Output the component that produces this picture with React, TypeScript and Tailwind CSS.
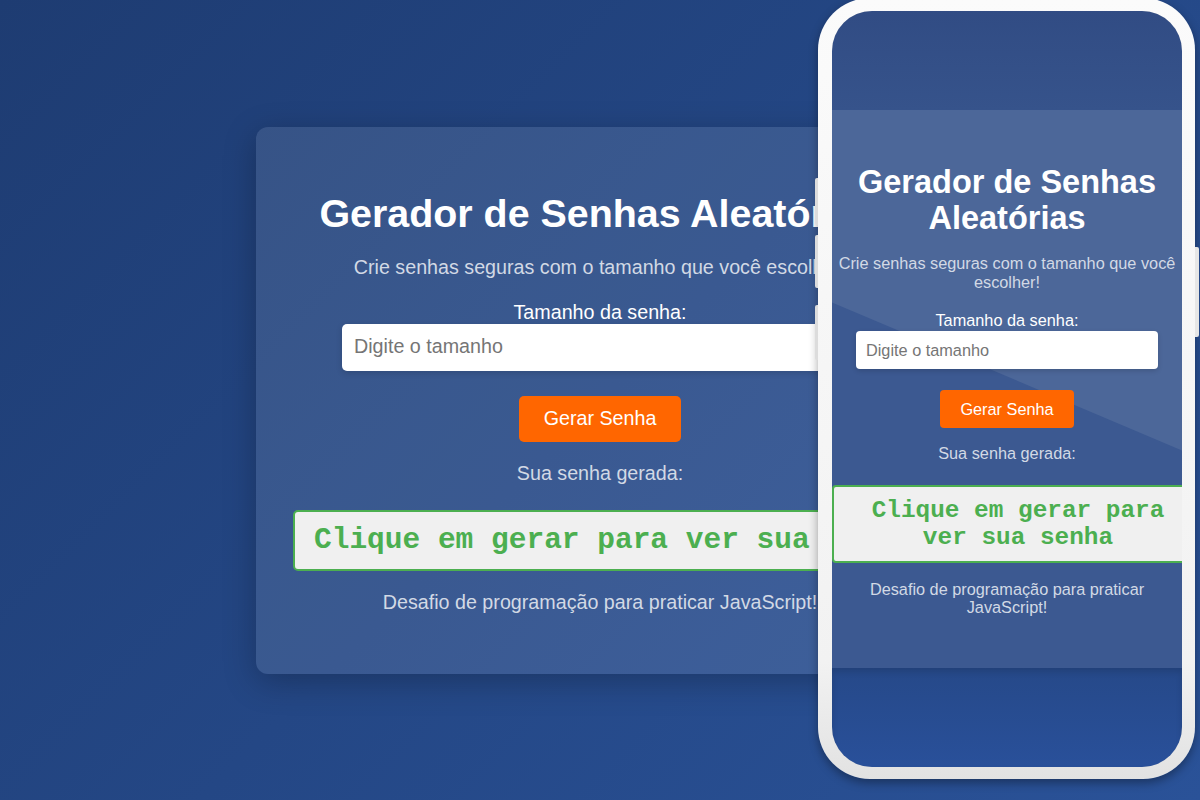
import React from "react";

const sans = { fontFamily: '"Liberation Sans", Arial, sans-serif' };

export default function App() {
  return (
    <div
      className="relative w-[1200px] h-[800px] overflow-hidden flex items-center justify-center bg-[linear-gradient(135deg,#1e3c72_0%,#2a5298_100%)]"
      style={sans}
    >
      {/* Main desktop card */}
      <div className="w-[688px] h-[547px] rounded-[12px] bg-white/10 shadow-[0_8px_32px_rgba(0,0,0,0.25)] flex flex-col items-center pt-[65px]">
        <h1 className="text-[39.4px] leading-[43px] font-bold text-white whitespace-nowrap">
          Gerador de Senhas Aleatórias
        </h1>
        <p className="mt-[21px] text-[19.7px] leading-[22px] text-[#d2d9e5] whitespace-nowrap">
          Crie senhas seguras com o tamanho que você escolher!
        </p>
        <label className="mt-[23px] text-[19.7px] leading-[22px] text-white">Tamanho da senha:</label>
        <div className="mt-[1px] w-[516px] h-[47px] rounded-[5px] bg-white shadow-[0_2px_6px_rgba(0,0,0,0.15)] flex items-center pl-[12px] text-[19.7px] text-[#757575]">
          Digite o tamanho
        </div>
        <div className="mt-[25px] w-[162px] h-[46px] rounded-[5px] bg-[#ff6600] flex items-center justify-center text-[19.7px] text-white">
          Gerar Senha
        </div>
        <p className="mt-[20px] text-[19.7px] leading-[22px] text-[#d2d9e5]">Sua senha gerada:</p>
        <div className="mt-[26px] w-[614px] h-[61px] rounded-[5px] bg-[#f0f0f0] border-[2.5px] border-[#4caf50] flex items-center pl-[19px] whitespace-nowrap overflow-hidden">
          <span
            className="text-[29.5px] leading-[32px] font-bold text-[#4caf50]"
            style={{ fontFamily: '"Liberation Mono", "Courier New", monospace' }}
          >
            Clique em gerar para ver sua senha
          </span>
        </div>
        <p className="mt-[20px] text-[19.7px] leading-[22px] text-[#d2d9e5] whitespace-nowrap">
          Desafio de programação para praticar JavaScript!
        </p>
      </div>

      {/* Phone mockup */}
      <div className="absolute left-[818px] top-[-2px] w-[377px] h-[781px] rounded-[52px] bg-[linear-gradient(180deg,#fbfbfb_0%,#f2f2f2_85%,#e2e2e2_100%)] pt-[13px] pl-[14px] pr-[13px] pb-[12px] shadow-[0_4px_10px_rgba(0,0,0,0.35)]">
        {/* side buttons */}
        <div className="absolute left-[-3px] top-[180px] w-[3px] h-[47px] rounded-l-[2px] bg-[#dcdcdc]" />
        <div className="absolute left-[-3px] top-[237px] w-[3px] h-[53px] rounded-l-[2px] bg-[#dcdcdc]" />
        <div className="absolute left-[-3px] top-[307px] w-[3px] h-[55px] rounded-l-[2px] bg-[#dcdcdc]" />
        <div className="absolute right-[-4px] top-[249px] w-[4px] h-[90px] rounded-r-[2px] bg-[#e6e6e6]" />

        <div className="w-full h-full rounded-[40px] overflow-hidden flex flex-col shadow-[inset_0_0_4px_rgba(0,0,0,0.3)]">
          <div className="h-[99px] shrink-0 bg-[linear-gradient(180deg,#314c84_0%,#36538b_100%)]" />
          <div className="relative h-[558px] shrink-0 bg-[#3c5991] flex flex-col items-center pt-[54px]">
            <div className="absolute inset-0 bg-[#4c6799] [clip-path:polygon(0_0,100%_0,100%_61%,0_34.5%)]" />
            <h2 className="relative text-[32.5px] leading-[36px] font-bold text-white text-center whitespace-nowrap">
              Gerador de Senhas
              <br />
              Aleatórias
            </h2>
            <p className="relative mt-[17.5px] text-[16.3px] leading-[19px] text-[#d2d9e5] text-center whitespace-nowrap">
              Crie senhas seguras com o tamanho que você
              <br />
              escolher!
            </p>
            <label className="relative mt-[19.5px] text-[16.3px] leading-[18px] text-white">Tamanho da senha:</label>
            <div className="relative mt-[2px] w-[302px] h-[38px] rounded-[4px] bg-white shadow-[0_2px_5px_rgba(0,0,0,0.15)] flex items-center pl-[10px] text-[16.3px] text-[#757575]">
              Digite o tamanho
            </div>
            <div className="relative mt-[21px] w-[134px] h-[38px] rounded-[4px] bg-[#ff6600] flex items-center justify-center text-[16.3px] text-white">
              Gerar Senha
            </div>
            <p className="relative mt-[16px] text-[16.3px] leading-[18px] text-[#d2d9e5]">Sua senha gerada:</p>
            <div className="relative self-start mt-[23px] w-[372px] h-[78px] rounded-[4px] bg-[#f0f0f0] border-2 border-[#4caf50] flex items-center justify-center px-[14px]">
              <span
                className="text-[24.4px] leading-[27px] font-bold text-[#4caf50] text-center"
                style={{ fontFamily: '"Liberation Mono", "Courier New", monospace' }}
              >
                Clique em gerar para ver sua senha
              </span>
            </div>
            <p className="relative mt-[17px] text-[16.3px] leading-[18px] text-[#d2d9e5] text-center whitespace-nowrap">
              Desafio de programação para praticar
              <br />
              JavaScript!
            </p>
          </div>
          <div className="flex-1 bg-[linear-gradient(180deg,#264989_0%,#29509a_100%)] shadow-[inset_0_4px_6px_rgba(0,0,0,0.12)]" />
        </div>
      </div>
    </div>
  );
}
